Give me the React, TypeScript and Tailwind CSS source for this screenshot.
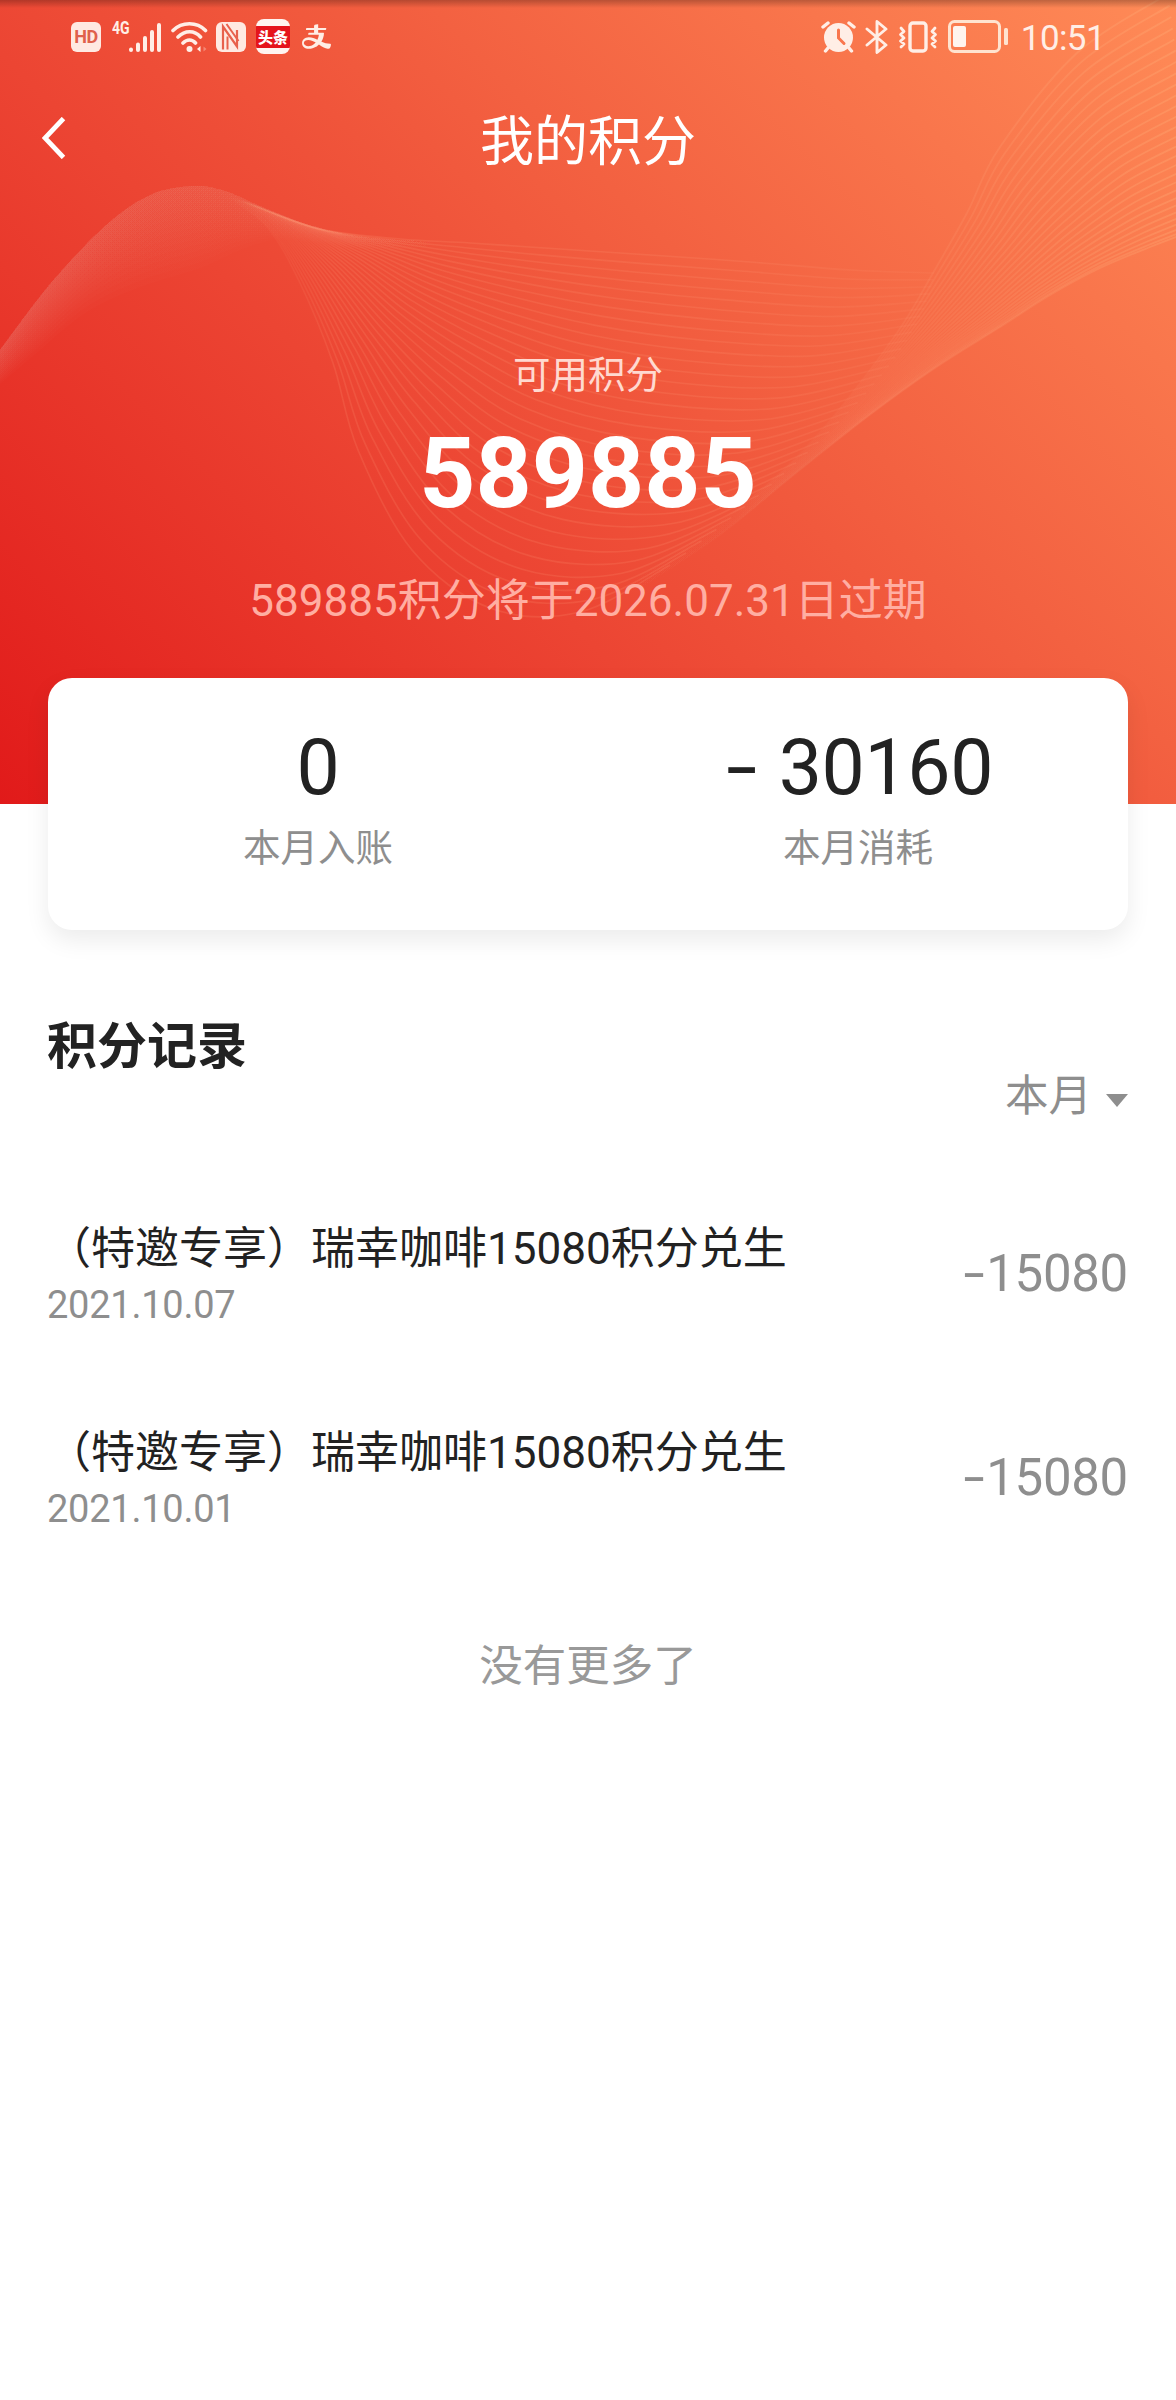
import { AiOutlineAlipay } from 'react-icons/ai';

type Point = [number, number];

const records = [
  { id: 1, title: '（特邀专享）瑞幸咖啡15080积分兑生', date: '2021.10.07', value: '15080' },
  { id: 2, title: '（特邀专享）瑞幸咖啡15080积分兑生', date: '2021.10.01', value: '15080' },
];

// Hanging threads: three key lines, the rest are blended between them
const deep: Point[] = [
  [225, 196], [267, 227], [300, 283], [333, 363], [358, 450], [412, 550], [490, 608], [580, 612], [670, 565],
];
const middle: Point[] = [
  [240, 200], [290, 224], [345, 262], [400, 310], [465, 355], [540, 395], [640, 420], [760, 425], [862, 398],
];
const shallow: Point[] = [
  [255, 206], [320, 229], [400, 239], [470, 243], [560, 249], [650, 255], [750, 262], [850, 270], [934, 273],
];

// Fan on the right
const fanTop: Point[] = [
  [600, 603], [705, 533], [780, 473], [833, 417], [897, 333], [933, 273], [967, 213], [1000, 147], [1077, 53], [1168, -6],
];
const fanBottom: Point[] = [
  [640, 588], [720, 535], [790, 478], [867, 417], [935, 368], [1000, 327], [1050, 295], [1100, 268], [1150, 247], [1200, 228],
];

// Hill on the left
const hillTop: Point[] = [
  [-10, 362], [0, 350], [50, 284], [105, 226], [150, 195], [192, 186], [225, 191], [265, 208], [310, 225], [365, 237], [460, 242],
];
const hillBottom: Point[] = [
  [-10, 392], [0, 384], [33, 356], [85, 313], [140, 287], [200, 268], [240, 250], [275, 240], [320, 243], [380, 250], [470, 246],
];

function toPath(pts: Point[]) {
  let d = `M${pts[0][0]} ${pts[0][1]}`;
  for (let i = 0; i < pts.length - 1; i++) {
    const p0 = pts[i - 1] ?? pts[i];
    const p1 = pts[i];
    const p2 = pts[i + 1];
    const p3 = pts[i + 2] ?? p2;
    d += ` C${p1[0] + (p2[0] - p0[0]) / 6} ${p1[1] + (p2[1] - p0[1]) / 6} ${
      p2[0] - (p3[0] - p1[0]) / 6
    } ${p2[1] - (p3[1] - p1[1]) / 6} ${p2[0]} ${p2[1]}`;
  }
  return d;
}

function mix(from: Point[], to: Point[], t: number): Point[] {
  return from.map((p, i) => [p[0] + (to[i][0] - p[0]) * t, p[1] + (to[i][1] - p[1]) * t]);
}

function blend(t: number): Point[] {
  const a = 2 * (t - 0.5) * (t - 1);
  const b = -4 * t * (t - 1);
  const c = 2 * t * (t - 0.5);
  return deep.map((p, i) => [
    a * p[0] + b * middle[i][0] + c * shallow[i][0],
    a * p[1] + b * middle[i][1] + c * shallow[i][1],
  ]);
}

const threads = Array.from({ length: 32 }, (_, i) => toPath(blend(i / 31)));
const fan = Array.from({ length: 28 }, (_, i) =>
  toPath(mix(fanTop, fanBottom, 1 - Math.pow(1 - i / 27, 1.35))),
);
const hill = Array.from({ length: 14 }, (_, i) => {
  const lower = toPath(mix(hillTop, hillBottom, (i + 1) / 14).reverse());
  return `${toPath(hillTop)} ${lower.replace('M', 'L')} Z`;
});

function Waves() {
  return (
    <svg className="absolute inset-0" width="1176" height="804" viewBox="0 0 1176 804" fill="none">
      <defs>
        <linearGradient id="thread" x1="225" y1="0" x2="934" y2="0" gradientUnits="userSpaceOnUse">
          <stop offset="0" stopColor="#ff9c78" stopOpacity="0" />
          <stop offset="0.06" stopColor="#ff9c78" stopOpacity="0.05" />
          <stop offset="0.16" stopColor="#ff9c78" stopOpacity="0.17" />
          <stop offset="0.7" stopColor="#ff9c78" stopOpacity="0.17" />
          <stop offset="1" stopColor="#ff9c78" stopOpacity="0.09" />
        </linearGradient>
        <linearGradient id="fan" x1="600" y1="0" x2="1176" y2="0" gradientUnits="userSpaceOnUse">
          <stop offset="0" stopColor="#ffa080" stopOpacity="0" />
          <stop offset="0.22" stopColor="#ffa080" stopOpacity="0.012" />
          <stop offset="0.38" stopColor="#ffa080" stopOpacity="0.04" />
          <stop offset="0.55" stopColor="#ffa880" stopOpacity="0.12" />
          <stop offset="1" stopColor="#ffb880" stopOpacity="0.26" />
        </linearGradient>
        <linearGradient id="hill" x1="0" y1="0" x2="460" y2="0" gradientUnits="userSpaceOnUse">
          <stop offset="0" stopColor="#e8b0a8" stopOpacity="0.02" />
          <stop offset="0.5" stopColor="#f0b0a0" stopOpacity="0.013" />
          <stop offset="0.75" stopColor="#ffb0a0" stopOpacity="0.01" />
          <stop offset="1" stopColor="#ffb0a0" stopOpacity="0" />
        </linearGradient>
      </defs>
      {hill.map((d, i) => (
        <path key={i} d={d} fill="url(#hill)" />
      ))}
      {threads.map((d, i) => (
        <path key={i} d={d} stroke="url(#thread)" strokeWidth="1.6" />
      ))}
      {fan.map((d, i) => (
        <path key={i} d={d} stroke="url(#fan)" strokeWidth="1.8" />
      ))}
    </svg>
  );
}

function StatusBar() {
  return (
    <div className="relative flex h-[73px] items-center pl-[71px] pr-[73px] text-[#ffeee6]">
      <div className="flex h-[30px] w-[30px] items-center justify-center rounded-[6px] bg-[#ffe9e2] font-[Roboto] text-[18px] font-bold leading-none tracking-[-0.5px] text-[#e0604c]">
        HD
      </div>
      <span className="-mt-[18px] ml-[11px] w-[17px] origin-left scale-x-[0.78] font-[Roboto] text-[18px] font-bold leading-none">4G</span>
      <svg className="-ml-px" width="34" height="32" viewBox="0 0 34 32" stroke="currentColor" strokeWidth="4" strokeLinecap="round">
        <path d="M3 28.500v.500M10 23.500v5.500M17 17v12M24 11v18M31 4v25" />
      </svg>
      <svg className="ml-[9px]" width="37" height="32" viewBox="0 0 37 32" fill="none" stroke="currentColor" strokeWidth="3.600" strokeLinecap="round">
        <path d="M2 9.500C11 .500 26 .500 34.500 9.500M7 16C14 9 23.500 9 29.500 16M12 22c4-4 9-4 12.500 0" />
        <circle cx="18.500" cy="28" r="3" fill="currentColor" stroke="none" />
        <path d="M29.500 25v6l-3.500-3z" fill="currentColor" stroke="none" />
        <path d="M32.500 25.500v5l3-2.500z" fill="currentColor" stroke="none" opacity="0.35" />
      </svg>
      <svg className="ml-[8px]" width="30" height="30" viewBox="0 0 30 30" fill="none">
        <rect width="30" height="30" rx="6" fill="#ffe9e2" />
        <path d="M7 27.500V4.500L21 24.500V8" stroke="#e8604c" strokeWidth="2.200" />
        <path d="M10.500 2L22.500 19" stroke="#e8604c" strokeWidth="2" />
        <path d="M11.500 14.500v13" stroke="#e8604c" strokeWidth="2" />
      </svg>
      <div className="ml-[10px] flex h-[35px] w-[34px] items-center overflow-hidden rounded-[8px] bg-[#fff4f0]">
        <div className="flex h-[22px] w-full items-center justify-center bg-[#e5141c] font-['Noto_Sans_CJK_SC',sans-serif] text-[15px] font-black leading-none text-white">
          头条
        </div>
      </div>
      <AiOutlineAlipay className="ml-[10px]" size={33} />

      <div className="-mr-[2px] ml-auto flex items-center">
        <svg width="35" height="32" viewBox="0 0 35 32">
          <circle cx="17.500" cy="16.500" r="14.500" fill="currentColor" />
          <path d="M2 6l5-4M33 6l-5-4M7 27l-2.500 3M28 27l2.500 3" stroke="currentColor" strokeWidth="3.400" strokeLinecap="round" />
          <path d="M17.500 9v8l5.500 5.500" fill="none" stroke="#f9764e" strokeWidth="3" strokeLinecap="round" />
        </svg>
        <svg className="ml-[9px]" width="23" height="36" viewBox="0 0 23 36" fill="none" stroke="currentColor" strokeWidth="2.900" strokeLinecap="round" strokeLinejoin="round">
          <path d="M2 10l19 16-9 7.500V2.500L21 10 2 26" />
        </svg>
        <svg className="ml-[10px]" width="40" height="32" viewBox="0 0 40 32" fill="none" stroke="currentColor" strokeLinecap="round" strokeLinejoin="round">
          <rect x="12" y="2" width="16" height="28" rx="3" strokeWidth="3.400" />
          <path d="M3 7l3 3.500-3.500 3 3.500 3.500-3.500 3 3.500 3-3 3M37 7l-3 3.500 3.500 3-3.500 3.500 3.500 3-3.500 3 3 3" strokeWidth="2.800" />
        </svg>
        <svg className="ml-[10px]" width="61" height="33" viewBox="0 0 61 33" fill="none">
          <rect x="1.500" y="1.500" width="50" height="30" rx="5" stroke="#ffe3cf" strokeWidth="3" />
          <rect x="5" y="6" width="13" height="21" rx="2" fill="#fff4ee" />
          <rect x="56" y="8" width="4" height="17" rx="1.500" fill="#ffe3cf" />
        </svg>
        <span className="ml-[12px] mt-[3px] font-[Roboto] text-[35px] font-normal leading-none tracking-[-0.6px]">10:51</span>
      </div>
    </div>
  );
}

function Stat({ value, label, negative }: { value: string; label: string; negative?: boolean }) {
  return (
    <div className="flex flex-1 flex-col items-center pt-[52px]">
      <span className="flex h-[76px] items-center text-[77px] leading-[76px] tracking-[-0.4px] text-[#222]">
        {negative && <span className="ml-[8px] mr-[27px] inline-block scale-x-[1.450]">-</span>}
        {value}
      </span>
      <span className="mt-[15px] text-[37.500px] leading-[54px] text-[#8e8e8e]">{label}</span>
    </div>
  );
}

export default function App() {
  return (
    <div className="min-h-[2400px] w-[1176px] bg-white font-[Roboto,'Noto_Sans_CJK_SC',sans-serif]">
      <header className="relative h-[804px] bg-[linear-gradient(45deg,#e11a1a_0%,#ec4533_38%,#f36141_62%,#ff8b57_100%)]">
        <Waves />
        <div className="absolute inset-x-0 top-0 h-[8px] bg-gradient-to-b from-black/25 to-transparent" />
        <StatusBar />
        <div className="relative flex h-[134px] items-center justify-center">
          <button className="absolute left-[42px] top-[44px]" aria-label="返回">
            <svg width="24" height="42" viewBox="0 0 24 42" fill="none" stroke="#fff" strokeWidth="4.800">
              <path d="M21.500 1.500L3 21l18.500 19.500" />
            </svg>
          </button>
          <h1 className="mt-[5px] text-[54px] leading-none text-white">我的积分</h1>
        </div>
        <div className="relative flex flex-col items-center">
          <p className="mt-[141px] text-[37.500px] leading-[54px] text-[#ffd9d0]">可用积分</p>
          <p className="mt-[23px] text-[98px] font-bold leading-[98px] text-white">589885</p>
          <p className="mt-[46px] text-[44px] leading-[64px] text-[#ffaea2]">589885积分将于2026.07.31日过期</p>
        </div>
      </header>

      <section className="relative mx-[48px] -mt-[126px] flex h-[252px] rounded-[24px] bg-white shadow-[0_10px_24px_rgba(0,0,0,0.08)]">
        <Stat value="0" label="本月入账" />
        <Stat value="30160" label="本月消耗" negative />
      </section>

      <main className="px-[48px]">
        <h2 className="-ml-px mt-[81px] text-[50px] font-bold leading-[72px] text-[#222]">积分记录</h2>
        <div className="-mt-[18px] flex items-center justify-end text-[43.500px] leading-[64px] text-[#8e8e8e]">
          本月
          <svg className="ml-[14px] mt-[6px]" width="22" height="13" viewBox="0 0 22 13">
            <path d="M0 0h22L11 13z" fill="#8e8e8e" />
          </svg>
        </div>
        <ul className="-ml-px mt-[88px]">
          {records.map(el => (
            <li key={el.id} className="flex h-[204px] items-start justify-between">
              <div>
                <p className="text-[44px] leading-[64px] text-[#222]">{el.title}</p>
                <p className="text-[38px] leading-[48px] tracking-[-0.25px] text-[#8e8e8e]">{el.date}</p>
              </div>
              <span className="mt-[25px] flex items-center text-[51px] leading-[64px] tracking-[-0.3px] text-[#8e8e8e]">
                <span className="mr-[5px] inline-block scale-x-[1.500]">-</span>
                {el.value}
              </span>
            </li>
          ))}
        </ul>
        <p className="mt-[10px] text-center text-[43.500px] leading-[64px] text-[#999]">没有更多了</p>
      </main>
    </div>
  );
}
